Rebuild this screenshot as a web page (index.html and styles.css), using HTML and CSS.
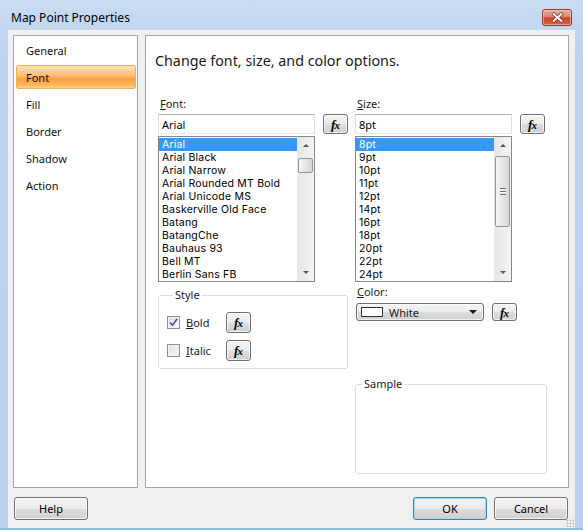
FILE: index.html
```html
<!DOCTYPE html>
<html lang="en">
<head>
    <meta charset="UTF-8">
    <meta name="viewport" content="width=device-width, initial-scale=1.0">
    <title>Map Point Properties</title>
    <link rel="stylesheet" href="styles.css">
</head>
<body>

    <div class="window">
        <div class="titlebar">
            <span class="title">Map Point Properties</span>
            <button class="close" type="button" aria-label="Close">
                <svg width="13" height="11" viewBox="0 0 13 11">
                    <path d="M2.5 2 L10.5 9 M10.5 2 L2.5 9" stroke="#7a2a1c" stroke-width="3.4" stroke-linecap="round"/>
                    <path d="M2.5 2 L10.5 9 M10.5 2 L2.5 9" stroke="#ffffff" stroke-width="2" stroke-linecap="round"/>
                </svg>
            </button>
        </div>

        <div class="client">
            <div class="panels">
                <ul class="nav">
                    <li>General</li>
                    <li class="active">Font</li>
                    <li>Fill</li>
                    <li>Border</li>
                    <li>Shadow</li>
                    <li>Action</li>
                </ul>

                <div class="page">
                    <h1 class="heading">Change font, size, and color options.</h1>

                    <div class="columns">
                        <div class="col col-left">
                            <label class="field-label" for="font"><u>F</u>ont:</label>
                            <div class="input-row">
                                <input class="field-input" type="text" id="font" value="Arial">
                                <button class="fx" type="button"><i>f</i><i>x</i></button>
                            </div>
                            <div class="listbox">
                                <ul class="items">
                                    <li class="selected">Arial</li>
                                    <li>Arial Black</li>
                                    <li>Arial Narrow</li>
                                    <li>Arial Rounded MT Bold</li>
                                    <li>Arial Unicode MS</li>
                                    <li>Baskerville Old Face</li>
                                    <li>Batang</li>
                                    <li>BatangChe</li>
                                    <li>Bauhaus 93</li>
                                    <li>Bell MT</li>
                                    <li>Berlin Sans FB</li>
                                </ul>
                                <div class="scrollbar">
                                    <span class="arrow arrow-up"></span>
                                    <div class="track">
                                        <div class="thumb thumb-font"></div>
                                    </div>
                                    <span class="arrow arrow-down"></span>
                                </div>
                            </div>

                            <fieldset class="group style-group">
                                <legend>Style</legend>
                                <div class="check-row">
                                    <span class="checkbox checked">
                                        <svg width="11" height="11" viewBox="0 0 11 11">
                                            <path d="M2 5.5 L4.5 8.2 L9.2 1.8" fill="none" stroke="#4d6199" stroke-width="1.8"/>
                                        </svg>
                                    </span>
                                    <span class="check-text"><u>B</u>old</span>
                                    <button class="fx fx-tall" type="button"><i>f</i><i>x</i></button>
                                </div>
                                <div class="check-row">
                                    <span class="checkbox"></span>
                                    <span class="check-text"><u>I</u>talic</span>
                                    <button class="fx fx-tall" type="button"><i>f</i><i>x</i></button>
                                </div>
                            </fieldset>
                        </div>

                        <div class="col col-right">
                            <label class="field-label" for="size"><u>S</u>ize:</label>
                            <div class="input-row">
                                <input class="field-input" type="text" id="size" value="8pt">
                                <button class="fx" type="button"><i>f</i><i>x</i></button>
                            </div>
                            <div class="listbox">
                                <ul class="items">
                                    <li class="selected">8pt</li>
                                    <li>9pt</li>
                                    <li>10pt</li>
                                    <li>11pt</li>
                                    <li>12pt</li>
                                    <li>14pt</li>
                                    <li>16pt</li>
                                    <li>18pt</li>
                                    <li>20pt</li>
                                    <li>22pt</li>
                                    <li>24pt</li>
                                </ul>
                                <div class="scrollbar">
                                    <span class="arrow arrow-up"></span>
                                    <div class="track">
                                        <div class="thumb thumb-size"><span class="grip"></span></div>
                                    </div>
                                    <span class="arrow arrow-down"></span>
                                </div>
                            </div>

                            <span class="field-label color-label"><u>C</u>olor:</span>
                            <div class="color-row">
                                <div class="dropdown">
                                    <span class="swatch"></span>
                                    <span class="dropdown-text">White</span>
                                    <span class="dropdown-arrow"></span>
                                </div>
                                <button class="fx fx-short" type="button"><i>f</i><i>x</i></button>
                            </div>

                            <fieldset class="group sample-group">
                                <legend>Sample</legend>
                            </fieldset>
                        </div>
                    </div>
                </div>
            </div>

            <div class="footer">
                <button class="btn btn-help" type="button">Help</button>
                <div class="footer-right">
                    <button class="btn btn-default" type="button">OK</button>
                    <button class="btn" type="button">Cancel</button>
                </div>
            </div>

            <span class="grip-corner"></span>
        </div>
    </div>

</body>
</html>
```

FILE: styles.css
```css
body {
    margin: 0;
    width: 583px;
    height: 530px;
    overflow: hidden;
    font-family: "Noto Sans", "Open Sans", Arial, sans-serif;
    font-size: 11px;
    color: #000;
    background: linear-gradient(#c8dcf2, #bcd3ec 60px, #b8d0eb);
}

.window {
    height: 530px;
    box-sizing: border-box;
    display: flex;
    flex-direction: column;
    border-bottom: 2px solid #7cc4e4;
}

/* title bar */

.titlebar {
    height: 30px;
    box-sizing: border-box;
    padding: 4px 11px 0 11px;
    display: flex;
    align-items: center;
    justify-content: space-between;
}

.title {
    font-size: 12px;
    color: #000;
}

.close {
    width: 30px;
    height: 17px;
    padding: 0;
    border: 1px solid #8d3a2b;
    border-radius: 3px;
    background: linear-gradient(#eab0a3, #dc826e 45%, #c8452d 52%, #d4644a);
    display: flex;
    align-items: center;
    justify-content: center;
    box-shadow: inset 0 0 0 1px rgba(255, 220, 210, 0.5);
}

/* client area */

.client {
    position: relative;
    flex: 1;
    margin: 0 8px 0 8px;
    background: #f0f0f0;
    padding: 5px 6px 2px 5px;
    display: flex;
    flex-direction: column;
}

.panels {
    height: 453px;
    display: flex;
    gap: 7px;
}

.nav {
    width: 125px;
    box-sizing: border-box;
    margin: 0;
    padding: 2px 0 0 0;
    list-style: none;
    background: #fff;
    border: 1px solid #a5a5a5;
}

.nav li {
    height: 24px;
    line-height: 23px;
    margin: 0 1px 3px 2px;
    padding-left: 9px;
    box-sizing: border-box;
    border: 1px solid transparent;
    border-radius: 2px;
    color: #111;
}

.nav li.active {
    border-color: #e8b45a;
    background: linear-gradient(#fde1b6, #fcc27f 40%, #f9a041 60%, #fbb45c 85%, #fcd27c);
}

.page {
    flex: 1;
    background: #fff;
    border: 1px solid #a5a5a5;
    padding: 15px 0 0 9px;
}

.heading {
    margin: 0;
    font-size: 14.3px;
    font-weight: normal;
    line-height: 20px;
    color: #1a1a1a;
}

.columns {
    display: flex;
    gap: 7px;
    margin: 26px 0 0 3px;
}

.col {
    display: flex;
    flex-direction: column;
}

.col-left {
    width: 190px;
}

.col-right {
    width: 192px;
}

.field-label {
    line-height: 14px;
    padding-left: 2px;
    color: #1a1a1a;
}

.input-row {
    display: flex;
    gap: 8px;
    margin-top: 3px;
}

.field-input {
    width: 157px;
    height: 20px;
    box-sizing: border-box;
    margin: 0;
    padding: 0 3px;
    font-family: inherit;
    font-size: 11px;
    color: #000;
    border: 1px solid #abadb3;
    border-left-color: #dbdfe6;
    border-right-color: #dbdfe6;
    border-bottom-color: #e3e9ef;
    outline: none;
}

.fx {
    width: 25px;
    height: 20px;
    padding: 0;
    box-sizing: border-box;
    border: 1px solid #707070;
    border-radius: 3px;
    background: linear-gradient(#f4f4f4, #ebebeb 50%, #dddddd 51%, #cfcfcf);
    box-shadow: inset 0 0 0 1px rgba(255, 255, 255, 0.7);
    font-family: "Liberation Serif", "DejaVu Serif", serif;
    font-size: 13px;
    font-weight: bold;
    line-height: 1;
    color: #000;
}

.fx i {
    font-style: italic;
}

.fx i + i {
    font-size: 11px;
    margin-left: -1px;
}

.fx-tall {
    height: 21px;
}

.fx-short {
    height: 18px;
}

/* list boxes */

.listbox {
    width: 157px;
    height: 146px;
    box-sizing: border-box;
    margin-top: 2px;
    border: 1px solid #828790;
    display: flex;
    background: #fff;
}

.items {
    flex: 1;
    margin: 1px 0 0 0;
    padding: 0;
    list-style: none;
    font-family: Inter, "Noto Sans", sans-serif;
    font-size: 10.5px;
    letter-spacing: 0.2px;
}

.items li {
    height: 13px;
    line-height: 13px;
    padding-left: 3px;
    white-space: nowrap;
    color: #000;
}

.items li.selected {
    background: #3399ff;
    color: #fff;
}

.scrollbar {
    width: 17px;
    display: flex;
    flex-direction: column;
    background: linear-gradient(to right, #e6e6e6, #f4f4f4);
}

.arrow {
    height: 17px;
    display: flex;
    align-items: center;
    justify-content: center;
}

.arrow::before {
    content: "";
    border-left: 3px solid transparent;
    border-right: 3px solid transparent;
}

.arrow-up::before {
    border-bottom: 3px solid #555;
}

.arrow-down::before {
    border-top: 3px solid #555;
}

.track {
    flex: 1;
}

.thumb {
    margin: 0 1px;
    box-sizing: border-box;
    border: 1px solid #979797;
    border-radius: 2px;
    background: linear-gradient(to right, #f5f5f5, #e6e6e6 50%, #d6d6d6);
    display: flex;
    align-items: center;
    justify-content: center;
}

.thumb-font {
    margin-top: 4px;
    height: 15px;
}

.thumb-size {
    margin-top: 2px;
    height: 71px;
}

.grip {
    width: 6px;
    height: 7px;
    background: repeating-linear-gradient(#6f6f6f 0 1px, #f8f8f8 1px 2px, transparent 2px 3px);
}

/* group boxes */

.group {
    margin: 0;
    min-width: 0;
    box-sizing: border-box;
    border: 1px solid #d5dfe5;
    border-radius: 3px;
}

.group legend {
    line-height: 14px;
    padding: 0 2px;
    margin-left: 6px;
    color: #1a1a1a;
}

.style-group {
    margin-top: 6px;
    width: 190px;
    padding: 10px 0 7px 8px;
    display: flex;
    flex-direction: column;
    gap: 7px;
}

.check-row {
    display: flex;
    align-items: center;
    height: 21px;
}

.checkbox {
    width: 13px;
    height: 13px;
    box-sizing: border-box;
    border: 1px solid #8e8f8f;
    background: linear-gradient(135deg, #dcdcdc, #fbfbfb);
    box-shadow: inset 0 0 0 1px #f4f4f4;
    display: flex;
    align-items: center;
    justify-content: center;
}

.check-text {
    width: 34px;
    margin: 0 6px;
    color: #1a1a1a;
}

.color-label {
    margin-top: 3px;
}

.color-row {
    display: flex;
    gap: 8px;
    margin-top: 4px;
    padding-left: 1px;
}

.dropdown {
    width: 128px;
    height: 18px;
    box-sizing: border-box;
    border: 1px solid #707070;
    border-radius: 3px;
    background: linear-gradient(#f4f4f4, #ebebeb 50%, #dddddd 51%, #cfcfcf);
    box-shadow: inset 0 0 0 1px rgba(255, 255, 255, 0.7);
    display: flex;
    align-items: center;
    padding: 0 6px 0 4px;
}

.swatch {
    width: 22px;
    height: 10px;
    box-sizing: border-box;
    border: 1px solid #333;
    background: #fff;
}

.dropdown-text {
    flex: 1;
    margin-left: 6px;
    color: #1a1a1a;
}

.dropdown-arrow {
    border-left: 4px solid transparent;
    border-right: 4px solid transparent;
    border-top: 4px solid #1a1a1a;
}

.sample-group {
    margin-top: 56px;
    width: 192px;
    height: 97px;
    padding: 0;
}

/* footer buttons */

.footer {
    display: flex;
    justify-content: space-between;
    padding: 9px 1px 0 1px;
}

.footer-right {
    display: flex;
    gap: 7px;
}

.btn {
    width: 74px;
    height: 23px;
    padding: 0;
    border: 1px solid #707070;
    border-radius: 3px;
    background: linear-gradient(#f2f2f2, #ebebeb 50%, #dddddd 51%, #cfcfcf);
    box-shadow: inset 0 0 0 1px rgba(255, 255, 255, 0.75);
    font-family: inherit;
    font-size: 11px;
    color: #000;
}

.btn-default {
    border-color: #3c7fb1;
    box-shadow: inset 0 0 0 1px #9fd6f4;
}

.grip-corner {
    position: absolute;
    right: 1px;
    bottom: 1px;
    width: 8px;
    height: 8px;
    background: radial-gradient(circle, #b4b4b4 0.8px, transparent 1.1px) 0 0 / 3px 3px;
}
```
